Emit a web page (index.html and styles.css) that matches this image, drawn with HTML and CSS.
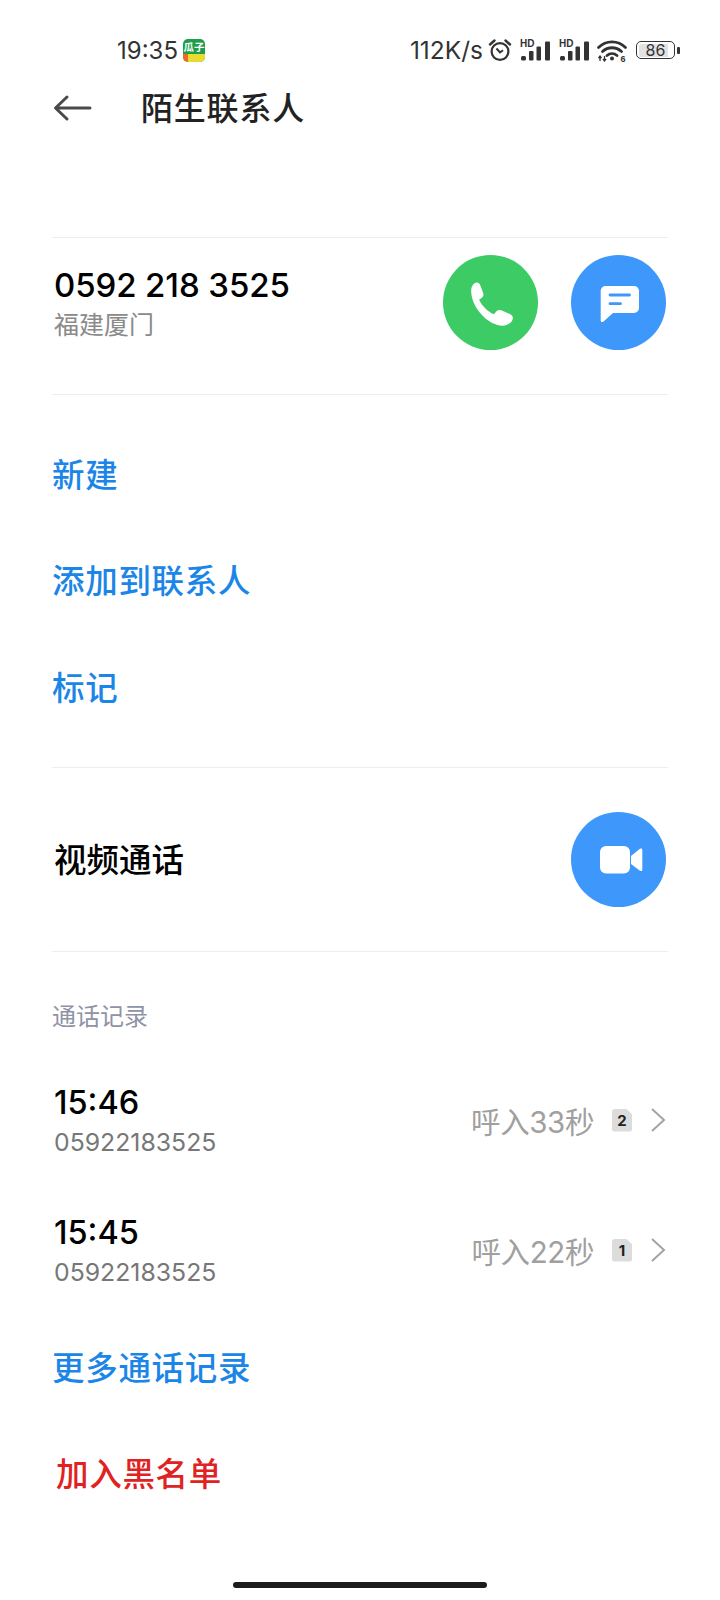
FILE: index.html
```html
<!DOCTYPE html>
<html lang="zh">
<head>
<meta charset="utf-8">
<title>陌生联系人</title>
<link rel="stylesheet" href="styles.css">
</head>
<body>
<div class="page">
  <header class="status">
    <div class="status-left">
      <span class="clock">19:35</span>
      <span class="app-badge"><span class="app-name">瓜子</span><span class="app-strip"></span></span>
    </div>
    <div class="status-right">
      <span class="speed">112K/s</span>
      <svg class="ic-alarm" viewBox="0 0 24 24" width="24" height="24"><circle cx="12" cy="13.500" r="8.400" fill="none" stroke="#333" stroke-width="2.200"/><path d="M8.500 10.500l3.500 4 3-2.200" fill="none" stroke="#333" stroke-width="2"/><path d="M2 6.500L6.500 2.500M22 6.500L17.500 2.500" stroke="#333" stroke-width="2.400" stroke-linecap="round"/></svg>
      <svg class="ic-signal" viewBox="0 0 31 22" width="31" height="22"><text x="0" y="8" class="hd">HD</text><rect x="1" y="17" width="5" height="4.500" rx="1.500" fill="#333"/><rect x="9" y="12" width="4.500" height="9.500" rx="1" fill="#333"/><rect x="16.500" y="7.500" width="4.500" height="14" rx="1" fill="#333"/><rect x="25" y="2.500" width="5" height="19" rx="1" fill="#333"/></svg>
      <svg class="ic-signal" viewBox="0 0 31 22" width="31" height="22"><text x="0" y="8" class="hd">HD</text><rect x="1" y="17" width="5" height="4.500" rx="1.500" fill="#333"/><rect x="9" y="12" width="4.500" height="9.500" rx="1" fill="#333"/><rect x="16.500" y="7.500" width="4.500" height="14" rx="1" fill="#333"/><rect x="25" y="2.500" width="5" height="19" rx="1" fill="#333"/></svg>
      <svg class="ic-wifi" viewBox="0 0 30 23" width="30" height="23"><path d="M1.500 8.500C9 1 21 1 28.500 8.500M5.500 12.500C11 7.500 19 7.500 24.500 12.500M10 16.500C13 14 17 14 20 16.500" fill="none" stroke="#333" stroke-width="2.800" stroke-linecap="round"/><circle cx="15" cy="19.500" r="2" fill="#333"/><text x="23.500" y="22.500" class="wifi6">6</text><path d="M3 17v5M7.500 17v5M1.500 19l1.500-2 1.500 2M6 20l1.500 2 1.500-2" fill="none" stroke="#333" stroke-width="1.300"/></svg>
      <span class="battery"><span class="batt-body"><span class="batt-fill">86</span></span><span class="batt-cap"></span></span>
    </div>
  </header>

  <div class="titlebar">
    <svg class="back" viewBox="0 0 40 28" width="40" height="28"><path d="M14 3L2.500 14 14 25M3 14H37" fill="none" stroke="#4a4a4a" stroke-width="3" stroke-linecap="round" stroke-linejoin="round"/></svg>
    <h1 class="title">陌生联系人</h1>
  </div>

  <section class="block block-number">
    <div class="number-text">
      <div class="number">0592 218 3525</div>
      <div class="place">福建厦门</div>
    </div>
    <div class="actions">
      <span class="round green">
        <svg viewBox="-4.500 -3 168 162" width="56" height="54"><path d="M30 19C38 14 44 17 47 24L56 48C58 54 57 58 52 62L44 68C52 86 70 104 88 112L96 103C100 99 105 98 110 100L136 111C144 115 147 120 144 128C140 138 128 146 114 146C70 146 20 90 20 42C20 32 23 24 30 19Z" fill="#fff"/></svg>
      </span>
      <span class="round blue">
        <svg viewBox="0 0 48 48" width="48" height="48"><path d="M11 7H39a5 5 0 0 1 5 5V29a5 5 0 0 1-5 5H18L8.500 42.500a1.600 1.600 0 0 1-2.800-1.100V12a5 5 0 0 1 5.300-5z" fill="#fff"/><path d="M15 16h19.500M15 24.700h10.500" stroke="#3e98fb" stroke-width="2.800" stroke-linecap="round"/></svg>
      </span>
    </div>
  </section>

  <section class="block block-links">
    <div class="link">新建</div>
    <div class="link">添加到联系人</div>
    <div class="link">标记</div>
  </section>

  <section class="block block-video">
    <div class="video-label">视频通话</div>
    <span class="round blue round-video">
      <svg viewBox="0 0 48 48" width="48" height="48"><rect x="5" y="10" width="30" height="27.500" rx="6" fill="#fff"/><path d="M36 20l9-7.200c1.100-.8 2.300-.2 2.300 1.200v19.500c0 1.400-1.200 2-2.300 1.200L36 28z" fill="#fff"/></svg>
    </span>
  </section>

  <section class="records">
    <div class="rec-head">通话记录</div>
    <div class="rec">
      <div class="rec-left">
        <div class="rec-time">15:46</div>
        <div class="rec-num">05922183525</div>
      </div>
      <div class="rec-right">
        <span class="rec-dur">呼入33秒</span>
        <span class="sim">2</span>
        <svg class="chev" viewBox="0 0 16 26" width="16" height="26"><path d="M2 2l12 11L2 24" fill="none" stroke="#a3a3a3" stroke-width="2"/></svg>
      </div>
    </div>
    <div class="rec">
      <div class="rec-left">
        <div class="rec-time">15:45</div>
        <div class="rec-num">05922183525</div>
      </div>
      <div class="rec-right">
        <span class="rec-dur">呼入22秒</span>
        <span class="sim">1</span>
        <svg class="chev" viewBox="0 0 16 26" width="16" height="26"><path d="M2 2l12 11L2 24" fill="none" stroke="#a3a3a3" stroke-width="2"/></svg>
      </div>
    </div>
    <div class="link link-more">更多通话记录</div>
    <div class="link link-block">加入黑名单</div>
  </section>

  <div class="home-bar"></div>
</div>
</body>
</html>
```

FILE: styles.css
```css
* { box-sizing: border-box; }
html, body { margin: 0; padding: 0; background: #fff; }
body { font-family: "Noto Sans CJK SC", Inter, sans-serif; }
.page { width: 720px; height: 1600px; position: relative; overflow: hidden; display: flex; flex-direction: column; }

.status { height: 50px; margin-top: 25px; padding: 0 40px 0 117px; display: flex; justify-content: space-between; align-items: center; color: #333; flex: none; }
.status-left, .status-right { display: flex; align-items: center; }
.clock { font-family: Inter, sans-serif; font-size: 24px; }
.app-badge { width: 22px; height: 23px; margin-left: 5px; border-radius: 5px; background: #1f9e4a; display: flex; flex-direction: column; align-items: center; overflow: hidden; }
.app-name { font-size: 10.500px; line-height: 15px; color: #fff; font-weight: 700; white-space: nowrap; }
.app-strip { flex: 1; width: 100%; background: linear-gradient(90deg, #f0682a 0 25%, #e8dc30 25% 100%); }
.speed { font-family: Inter, sans-serif; font-size: 24.500px; }
.ic-alarm { margin-left: 5px; }
.ic-signal { margin-left: 8px; }
.ic-wifi { margin-left: 7px; overflow: visible; }
.hd { font-family: "Liberation Sans", sans-serif; font-size: 10px; font-weight: 700; fill: #333; }
.wifi6 { font-family: "Liberation Sans", sans-serif; font-size: 9px; font-weight: 700; fill: #333; }
.battery { display: flex; align-items: center; margin-left: 9px; }
.batt-body { width: 39px; height: 18px; border: 1.500px solid #333; border-radius: 5px; padding: 1.500px; display: flex; }
.batt-fill { flex: 1; background: linear-gradient(90deg, #e2e2e2 86%, transparent 86%); border-radius: 2px; font-family: Inter, sans-serif; font-size: 16px; line-height: 12px; text-align: center; color: #333; }
.batt-cap { width: 3px; height: 7px; margin-left: 2px; background: #333; border-radius: 1px; }

.titlebar { height: 66px; padding: 0 0 0 53px; display: flex; align-items: center; flex: none; }
.back { flex: none; }
.title { margin: 0 0 4px 48px; font-size: 32px; font-weight: 500; color: #222; letter-spacing: 0.800px; line-height: 44px; }

.block { margin: 0 52px; border-top: 1px solid #eeeeee; flex: none; }
.block-number { margin-top: 96px; height: 157px; display: flex; justify-content: space-between; align-items: center; padding-bottom: 29px; }
.number { font-family: Inter, sans-serif; font-size: 33px; font-weight: 500; color: #000; line-height: 43px; letter-spacing: -0.100px; }
.place { font-size: 25px; color: #8a8a8a; line-height: 34px; margin-top: -1px; }
.number-text { padding-left: 2px; }
.actions { display: flex; gap: 33px; margin: 2px 2px 0 0; }
.round { width: 95px; height: 95px; border-radius: 50%; display: flex; align-items: center; justify-content: center; flex: none; }
.green { background: #3ccb64; }
.blue { background: #3e98fb; }
.round-video { margin-right: 2px; }

.block-links { height: 373px; padding-top: 24px; }
.link { height: 106.500px; font-size: 32.500px; font-weight: 500; color: #1b86e8; display: flex; align-items: center; letter-spacing: 0.700px; }

.block-video { height: 184px; display: flex; justify-content: space-between; align-items: center; }
.video-label { font-size: 32.500px; font-weight: 500; color: #000; margin: 0 0 4px 2px; }

.records { margin: 0 52px; border-top: 1px solid #eeeeee; padding-top: 46px; }
.rec-head { font-size: 24px; color: #8f93a6; line-height: 34px; margin-bottom: 23px; }
.rec { height: 130px; display: flex; justify-content: space-between; align-items: center; padding-left: 2px; }
.rec-time { font-family: Inter, sans-serif; font-size: 32.500px; font-weight: 500; color: #000; line-height: 44px; }
.rec-num { font-family: Inter, sans-serif; font-size: 24.800px; color: #777; line-height: 34px; }
.rec-right { display: flex; align-items: center; margin-right: 2px; }
.rec-dur { font-family: Inter, "Noto Sans CJK SC", sans-serif; font-size: 29.500px; color: #a0a0a0; letter-spacing: -0.400px; }
.sim { width: 20px; height: 23px; margin-left: 18px; background: #dcdcdc; border-radius: 3px; font-family: Inter, sans-serif; font-size: 15px; font-weight: 700; color: #222; display: flex; align-items: center; justify-content: center; clip-path: polygon(0 0, 70% 0, 100% 25%, 100% 100%, 0 100%); }
.chev { margin-left: 18px; }
.link-more { color: #1b86e8; height: 100px; }
.link-block { color: #e02222; height: 112px; margin-left: 4px; }

.home-bar { position: absolute; left: 233px; top: 1582px; width: 254px; height: 6px; border-radius: 3px; background: #1c1c1c; }
```
